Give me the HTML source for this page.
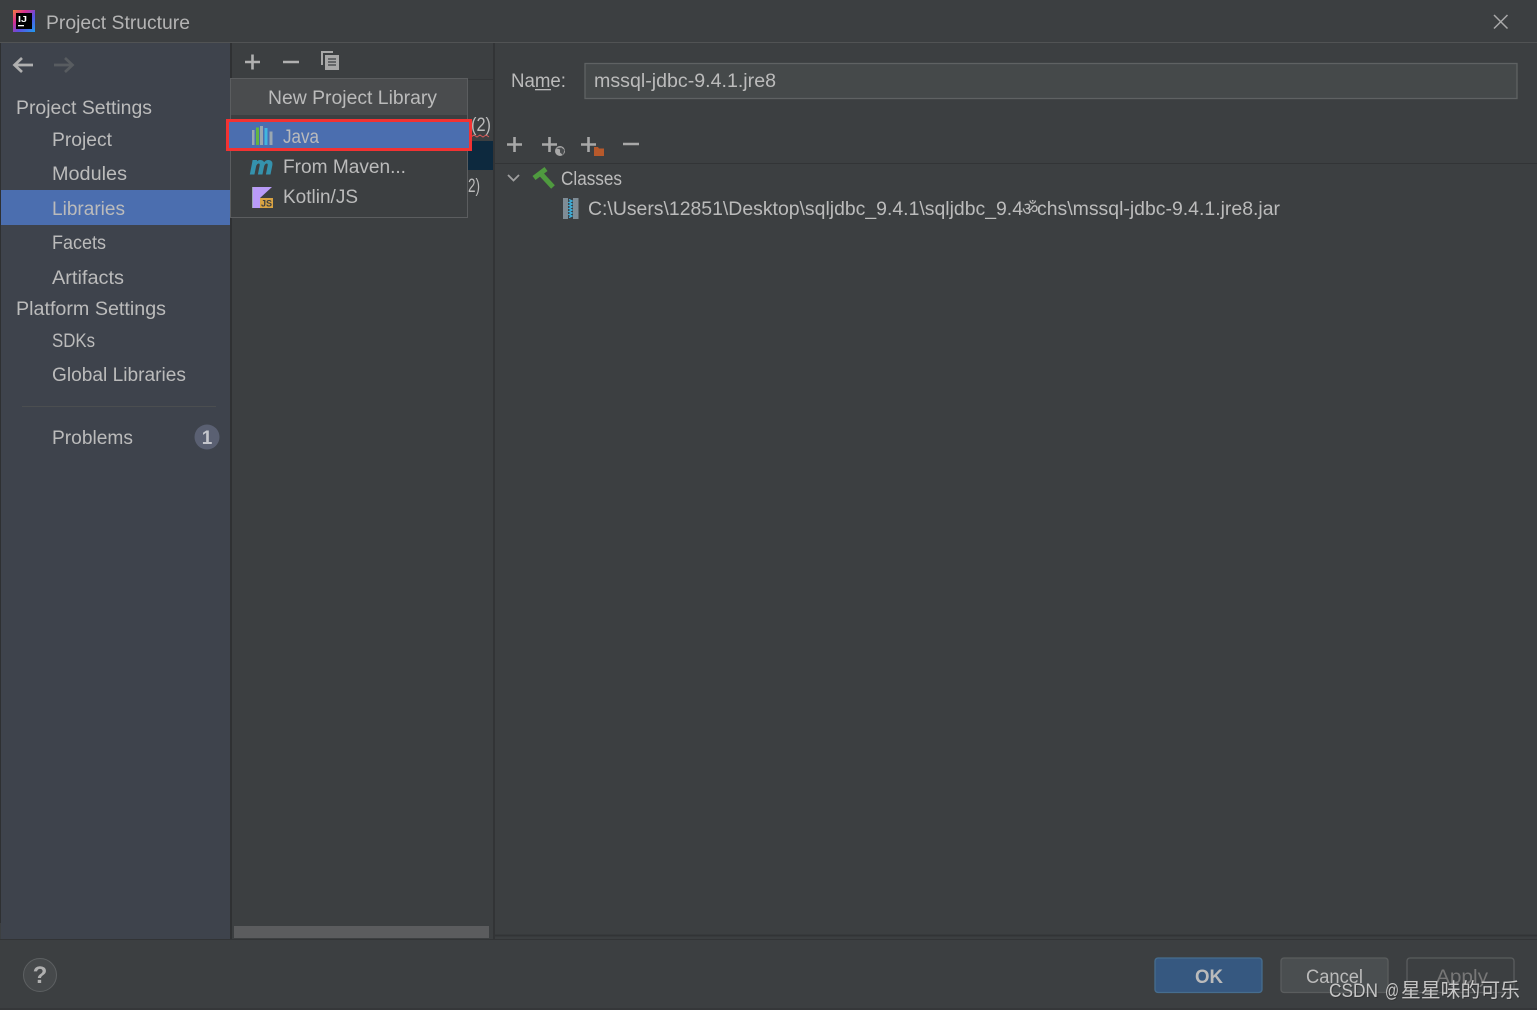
<!DOCTYPE html>
<html><head><meta charset="utf-8"><title>Project Structure</title>
<style>
html,body{margin:0;padding:0;background:#3c3f41;width:1537px;height:1010px;overflow:hidden}
svg{display:block}
text{font-family:"Liberation Sans","Noto Sans CJK SC",sans-serif;font-size:19px;fill:#bbbbbb}
</style></head><body>
<svg width="1537" height="1010" viewBox="0 0 1537 1010" xmlns="http://www.w3.org/2000/svg">
<defs><linearGradient id="lg" x1="0" y1="0" x2="1" y2="1"><stop offset="0" stop-color="#f5803a"/><stop offset=".3" stop-color="#d8308f"/><stop offset=".6" stop-color="#5a50e0"/><stop offset="1" stop-color="#1e9cf0"/></linearGradient></defs>
<rect width="1537" height="1010" fill="#3c3f41"/>
<!-- title bar -->
<rect x="0" y="42" width="1537" height="1" fill="#515354"/>
<rect x="13" y="10" width="22" height="22" fill="url(#lg)"/>
<rect x="16" y="13" width="16" height="16" fill="#000"/>
<text x="18" y="22" style="font-size:8px;font-weight:bold;fill:#fff" textLength="9" lengthAdjust="spacingAndGlyphs">IJ</text>
<rect x="18" y="25" width="6" height="1.300" fill="#fff"/>
<text x="46" y="29" textLength="144" lengthAdjust="spacingAndGlyphs" style="fill:#b4b4b4">Project Structure</text>
<path d="M1494 15l13.500 13.500M1507.500 15l-13.500 13.500" stroke="#a9a9a9" stroke-width="1.500" fill="none"/>
<!-- sidebar -->
<rect x="1" y="43" width="229" height="896" fill="#3e434c"/>
<rect x="0" y="43" width="1" height="880" fill="#2e3032"/>
<rect x="230" y="43" width="2" height="896" fill="#2f3133"/>
<path d="M15 65h18M22 58l-7.500 7 7.500 7" stroke="#b0b0b0" stroke-width="2.700" fill="none"/>
<path d="M54 65h18M65 58l7.500 7-7.500 7" stroke="#585c60" stroke-width="2.700" fill="none"/>
<rect x="1" y="190" width="229" height="35" fill="#4b6eaf"/>
<text x="16" y="114" textLength="136" lengthAdjust="spacingAndGlyphs">Project Settings</text>
<text x="52" y="146" textLength="60" lengthAdjust="spacingAndGlyphs">Project</text>
<text x="52" y="180" textLength="75" lengthAdjust="spacingAndGlyphs">Modules</text>
<text x="52" y="215" textLength="73" lengthAdjust="spacingAndGlyphs">Libraries</text>
<text x="52" y="249" textLength="54" lengthAdjust="spacingAndGlyphs">Facets</text>
<text x="52" y="284" textLength="72" lengthAdjust="spacingAndGlyphs">Artifacts</text>
<text x="16" y="315" textLength="150" lengthAdjust="spacingAndGlyphs">Platform Settings</text>
<text x="52" y="347" textLength="43" lengthAdjust="spacingAndGlyphs">SDKs</text>
<text x="52" y="381" textLength="134" lengthAdjust="spacingAndGlyphs">Global Libraries</text>
<rect x="22" y="406" width="194" height="1" fill="#4b4e50"/>
<text x="52" y="444" textLength="81" lengthAdjust="spacingAndGlyphs">Problems</text>
<circle cx="207" cy="437" r="12.500" fill="#5a6072"/>
<text x="207" y="444" text-anchor="middle" style="font-size:19px;font-weight:bold;fill:#c4c6cc">1</text>
<!-- middle panel -->
<rect x="232" y="79" width="262" height="1" fill="#333537"/>
<rect x="493" y="43" width="2" height="896" fill="#323436"/>
<path d="M245 62h15M252.500 54.500v15M283 62h16" stroke="#b0b0b0" stroke-width="2.600" fill="none"/>
<path d="M322 65v-13h11" stroke="#a8a8a8" stroke-width="2" fill="none"/>
<rect x="325" y="55" width="14" height="15" fill="#a8a8a8"/>
<path d="M328 59h8M328 62h8M328 65h8" stroke="#3c3f41" stroke-width="1.200"/>
<rect x="468" y="141" width="25" height="29" fill="#0d293e"/>
<text x="471" y="131" textLength="20" lengthAdjust="spacingAndGlyphs">(2)</text>
<path d="M471 137l3-2 3 2 3-2 3 2 3-2 3 2" stroke="#d05a5a" stroke-width="1" fill="none"/>
<text x="468" y="192" textLength="12" lengthAdjust="spacingAndGlyphs">2)</text>
<rect x="234" y="926" width="255" height="12" fill="#5b5c5e"/>
<!-- popup -->
<rect x="230.500" y="78.500" width="237" height="139" fill="#3c3f41" stroke="#5b5d5f"/>
<rect x="231" y="79" width="236" height="36" fill="#4a4c4e"/>
<text x="268" y="104" textLength="169" lengthAdjust="spacingAndGlyphs">New Project Library</text>
<rect x="228" y="121" width="242" height="28" fill="#4b6eaf"/>
<rect x="227.500" y="120.500" width="243" height="29" fill="none" stroke="#f23232" stroke-width="3"/>
<rect x="252" y="130" width="2.500" height="15" fill="#9aa7b0"/>
<rect x="256" y="127.500" width="3" height="17.500" fill="#62b543"/>
<rect x="260" y="126" width="3" height="19" fill="#9aa7b0"/>
<rect x="264.500" y="128" width="3" height="17" fill="#40b6e0"/>
<rect x="269.500" y="131.500" width="3" height="13.500" fill="#9aa7b0"/>
<text x="283" y="143" textLength="36" lengthAdjust="spacingAndGlyphs">Java</text>
<text x="250" y="174" textLength="23" lengthAdjust="spacingAndGlyphs" style="font-size:25px;font-weight:bold;font-style:italic;fill:#3592ad;stroke:#3592ad;stroke-width:1">m</text>
<text x="283" y="173" textLength="123" lengthAdjust="spacingAndGlyphs">From Maven...</text>
<path d="M252 187h20l-12 11v10h-8z" fill="#b99bf8"/>
<rect x="252" y="187" width="1" height="21" fill="#9aa7b0"/>
<rect x="260" y="198" width="13" height="10" fill="#d9a343"/>
<text x="261" y="206.500" textLength="11" lengthAdjust="spacingAndGlyphs" style="font-size:9px;font-weight:bold;fill:#3c3f41">JS</text>
<text x="283" y="203" textLength="75" lengthAdjust="spacingAndGlyphs">Kotlin/JS</text>
<!-- right panel -->
<text x="511" y="87" textLength="55" lengthAdjust="spacingAndGlyphs">Name:</text>
<rect x="535" y="89" width="16" height="1.300" fill="#bbbbbb"/>
<rect x="585" y="63.500" width="932" height="35" fill="#45494a" stroke="#5f6263" stroke-width="1.300"/>
<text x="594" y="87" textLength="182" lengthAdjust="spacingAndGlyphs">mssql-jdbc-9.4.1.jre8</text>
<path d="M507 144.500h15M514.500 137v15M542 144.500h15M549.500 137v15M581 144.500h15M588.500 137v15M623 144h16" stroke="#a8a8a8" stroke-width="2.600" fill="none"/>
<circle cx="560" cy="151" r="5" fill="#a8a8a8"/>
<path d="M556 148l4 1.500 0 3 3 2.500 1.500-5-3-2.500z" fill="#4a4d4f"/>
<path d="M594 147h4l1 1.500h5v7.500h-10z" fill="#b7592b"/>
<rect x="495" y="163" width="1042" height="1" fill="#323436"/>
<path d="M508 175l5.500 5.500 5.500-5.500" stroke="#a0a0a0" stroke-width="1.800" fill="none"/>
<path d="M534 178l12-9" stroke="#4f9a3f" stroke-width="5" fill="none"/>
<path d="M541 174l12 13" stroke="#4f9a3f" stroke-width="5" fill="none"/>
<text x="561" y="185" textLength="61" lengthAdjust="spacingAndGlyphs">Classes</text>
<rect x="563" y="198" width="15.500" height="21" fill="#7f8c95"/>
<rect x="568" y="198" width="5" height="21" fill="#3a3f44"/>
<path d="M569 199.500l3 1.500-3 1.500 3 1.500-3 1.500 3 1.500-3 1.500 3 1.500-3 1.500 3 1.500-3 1.500 3 1.500-3 1.500" stroke="#3fb0dc" stroke-width="1.300" fill="none"/>
<text x="588" y="215" textLength="435" lengthAdjust="spacingAndGlyphs">C:\Users\12851\Desktop\sqljdbc_9.4.1\sqljdbc_9.4</text>
<text x="1022" y="215" style="font-size:18px">ॐ</text>
<text x="1037" y="215" textLength="243" lengthAdjust="spacingAndGlyphs">chs\mssql-jdbc-9.4.1.jre8.jar</text>
<rect x="495" y="934.500" width="1042" height="2" fill="#323436"/>
<!-- bottom -->
<rect x="0" y="939" width="1537" height="1" fill="#323436"/>
<rect x="1" y="940" width="1536" height="68" fill="#3c3f41"/>
<rect x="0" y="1008" width="1537" height="2" fill="#353739"/>
<circle cx="40" cy="975" r="16.500" fill="#46494b" stroke="#5d6062" stroke-width="1"/>
<text x="40" y="983" text-anchor="middle" style="font-size:24px;font-weight:bold;fill:#b0b0b0">?</text>
<rect x="1155" y="958" width="107" height="34.500" rx="3" fill="#365880" stroke="#466d8e" stroke-width="1.300"/>
<text x="1195" y="983" style="font-weight:bold;fill:#bbbbbb" textLength="28" lengthAdjust="spacingAndGlyphs">OK</text>
<rect x="1281" y="958" width="107" height="34.500" rx="3" fill="#4a4e50" stroke="#5a5d5e" stroke-width="1.300"/>
<text x="1306" y="983" textLength="57" lengthAdjust="spacingAndGlyphs">Cancel</text>
<rect x="1407" y="958" width="107" height="34.500" rx="3" fill="#3c3f41" stroke="#5a5d5e" stroke-width="1.300"/>
<text x="1436" y="983" textLength="52" lengthAdjust="spacingAndGlyphs" style="fill:#777777">Apply</text>
<g style="opacity:.55">
<text x="1330" y="998" textLength="49" lengthAdjust="spacingAndGlyphs" style="fill:#2a2a2a">CSDN</text>
<text x="1386" y="998" textLength="14" lengthAdjust="spacingAndGlyphs" style="fill:#2a2a2a">@</text>
<text x="1402" y="998" textLength="119" lengthAdjust="spacingAndGlyphs" style="fill:#2a2a2a;font-size:20px">星星味的可乐</text>
</g>
<text x="1329" y="997" textLength="49" lengthAdjust="spacingAndGlyphs" style="fill:#c6c6c6">CSDN</text>
<text x="1385" y="997" textLength="14" lengthAdjust="spacingAndGlyphs" style="fill:#c6c6c6">@</text>
<text x="1401" y="997" textLength="119" lengthAdjust="spacingAndGlyphs" style="fill:#c6c6c6;font-size:20px">星星味的可乐</text>
</svg>
</body></html>
